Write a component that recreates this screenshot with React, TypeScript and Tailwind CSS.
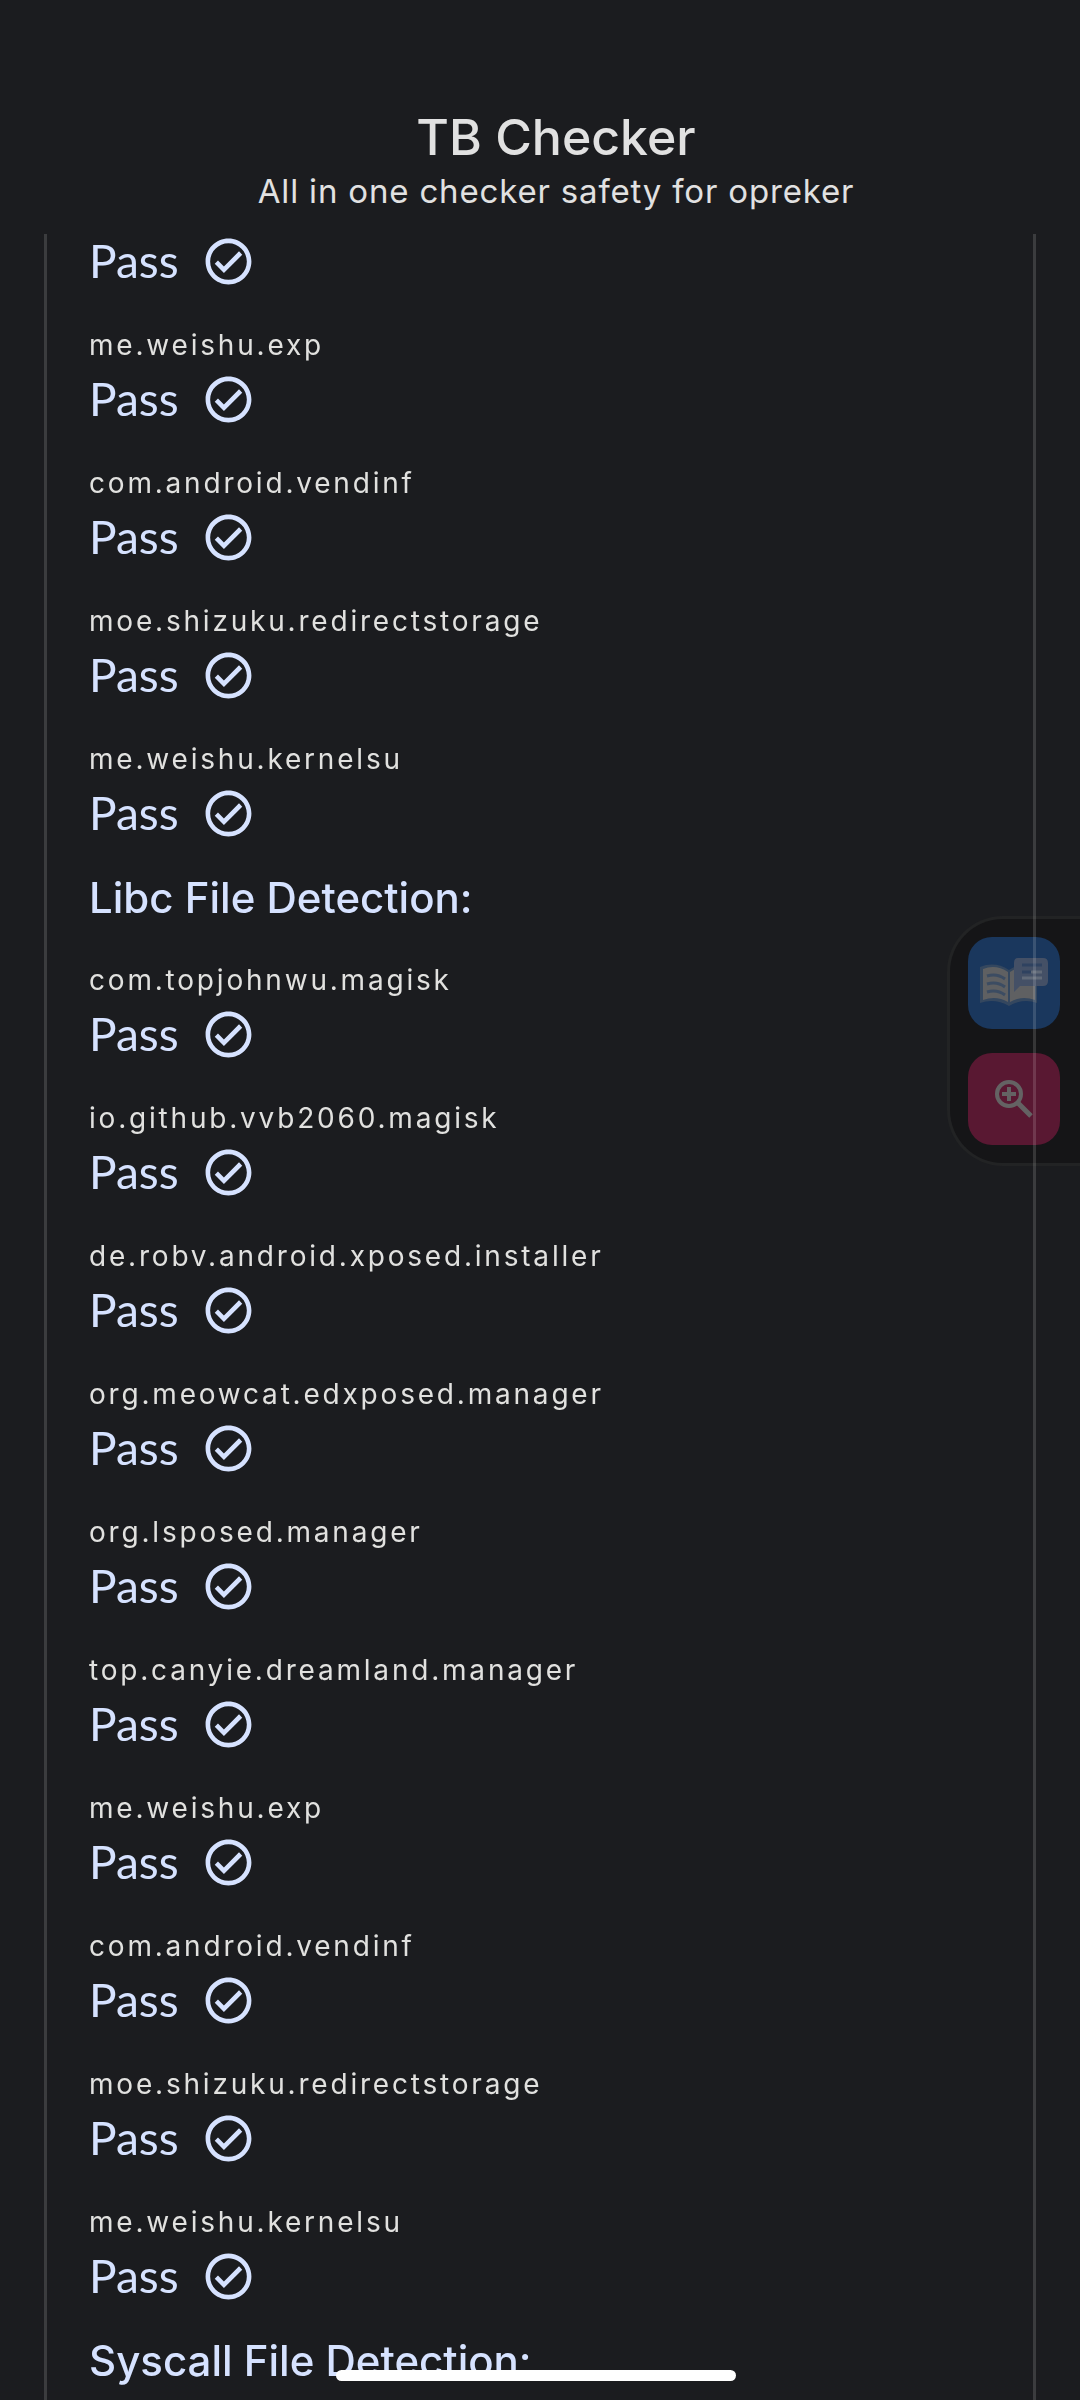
import { MdOutlineCheckCircle } from "react-icons/md";

const installed = [
  "me.weishu.exp",
  "com.android.vendinf",
  "moe.shizuku.redirectstorage",
  "me.weishu.kernelsu",
];

const libc = [
  "com.topjohnwu.magisk",
  "io.github.vvb2060.magisk",
  "de.robv.android.xposed.installer",
  "org.meowcat.edxposed.manager",
  "org.lsposed.manager",
  "top.canyie.dreamland.manager",
  ...installed,
];

function PassStatus() {
  return (
    <p className="flex h-[54px] items-center gap-[22px] font-['Lato',sans-serif] text-[46px] leading-[54px] text-[#d6e2ff]">
      Pass
      <MdOutlineCheckCircle className="size-[55px]" aria-hidden="true" />
    </p>
  );
}

function CheckItem({ name }: { name: string }) {
  return (
    <li className="flex flex-col gap-2 pt-[38px]">
      <span className="text-[28px] leading-[38px] tracking-widest text-[#e1e1df]">
        {name}
      </span>
      <PassStatus />
    </li>
  );
}

function SectionTitle({ children }: { children: string }) {
  return (
    <h2 className="mt-[33px] text-[42px] leading-[50px] font-medium text-[#d6e2ff]">
      {children}
    </h2>
  );
}

// ================= FLOATING SIDE TOOLS =================
function SideTools() {
  return (
    <aside className="fixed top-[916px] right-0 flex flex-col gap-6 rounded-l-[56px] border-3 border-r-0 border-[#222324] bg-[#151517] py-[18px] pr-5 pl-[18px]">
      <button
        type="button"
        aria-label="Read and translate"
        className="size-[92px] rounded-3xl bg-[#1a375d]"
      >
        <svg viewBox="0 0 92 92" className="size-full">
          <path
            d="M12 30 Q27 24 41 33 Q55 24 69 30 V66 Q55 61 41 69 Q27 61 12 66 Z"
            fill="#34475f"
          />
          <path
            d="M15 32 Q28 27 40 35 V65 Q28 58 15 63 Z M42 35 Q54 27 67 32 V63 Q54 58 42 65 Z"
            fill="#5f6062"
          />
          <path
            d="M19 39 Q29 36 37 42 M19 47 Q29 44 37 50 M19 55 Q29 52 37 58"
            fill="none"
            stroke="#3c4c62"
            strokeWidth="3"
          />
          <path
            d="M50 21 H75 Q80 21 80 26 V44 Q80 49 75 49 H52 L46 55 V26 Q46 21 50 21 Z"
            fill="#445066"
          />
          <path d="M54 28 H74 M54 35 H64" stroke="#2f4260" strokeWidth="3" />
          <path d="M63 35 H74 M54 41 H74" stroke="#616a78" strokeWidth="3" />
        </svg>
      </button>
      <button
        type="button"
        aria-label="Zoom in"
        className="size-[92px] rounded-3xl bg-[#591832]"
      >
        <svg viewBox="0 0 92 92" className="size-full" fill="none" stroke="#646263">
          <circle cx="41" cy="41" r="12" strokeWidth="4" />
          <path d="M41 34 V48 M34 41 H48" strokeWidth="4" />
          <path d="M50 50 L63 63" strokeWidth="5" />
        </svg>
      </button>
    </aside>
  );
}

export default function App() {
  return (
    <div className="flex min-h-screen flex-col bg-[#1b1c1f] font-['Inter',sans-serif]">
      <header className="flex h-[234px] flex-col items-center pt-[104px] pl-8 text-[#e1e1e1]">
        <h1 className="text-[50px] leading-[66px] font-medium">TB Checker</h1>
        <p className="text-[33px] leading-[42px] tracking-wide">
          All in one checker safety for opreker
        </p>
      </header>

      <SideTools />

      {/* translucent edges stay visible over the side tools */}
      <main className="pointer-events-none relative mx-11 flex-1 border-x-3 border-white/14 px-[42px]">
        <PassStatus />
        <ul>
          {installed.map((name) => (
            <CheckItem key={name} name={name} />
          ))}
        </ul>

        <SectionTitle>Libc File Detection:</SectionTitle>
        <ul>
          {libc.map((name) => (
            <CheckItem key={name} name={name} />
          ))}
        </ul>

        <SectionTitle>Syscall File Detection:</SectionTitle>
      </main>

      {/* gesture bar */}
      <div className="fixed inset-x-0 bottom-[19px] flex justify-center pr-2">
        <div className="h-[11px] w-[400px] rounded-full bg-white" />
      </div>
    </div>
  );
}
